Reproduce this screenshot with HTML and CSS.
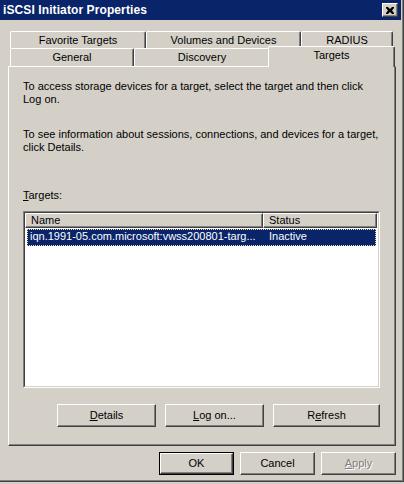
FILE: index.html
```html
<!DOCTYPE html>
<html>
<head>
<meta charset="utf-8">
<link rel="stylesheet" href="styles.css">
</head>
<body>
<div class="window">
  <div class="titlebar">
    <span class="title">iSCSI Initiator Properties</span>
    <div class="close">
      <svg width="8" height="7" viewBox="0 0 8 7"><path d="M0 0h2l2 2 2-2h2v1l-2 2.5 2 2.5v1h-2l-2-2-2 2h-2v-1l2-2.5-2-2.5z" fill="#000"/></svg>
    </div>
  </div>
  <div class="client">
    <div class="tabs">
      <div class="tabrow back">
        <div class="tab w136">Favorite Targets</div>
        <div class="tab w155">Volumes and Devices</div>
        <div class="tab w92">RADIUS</div>
      </div>
      <div class="tabrow front">
        <div class="tab w124">General</div>
        <div class="tab w136">Discovery</div>
        <div class="tab sel">Targets</div>
      </div>
    </div>
    <div class="panel">
      <p class="para">To access storage devices for a target, select the target and then click<br>Log on.</p>
      <p class="para p2">To see information about sessions, connections, and devices for a target,<br>click Details.</p>
      <div class="label"><u>T</u>argets:</div>
      <div class="listbox">
        <div class="listinner">
          <div class="header">
            <div class="hcell name">Name</div>
            <div class="hcell status">Status</div>
          </div>
          <div class="row selected">
            <span class="c-name">iqn.1991-05.com.microsoft:vwss200801-targ...</span>
            <span class="c-status">Inactive</span>
          </div>
        </div>
      </div>
      <div class="panelbuttons">
        <div class="btn w99"><u>D</u>etails</div>
        <div class="btn w99"><u>L</u>og on...</div>
        <div class="btn w107">R<u>e</u>fresh</div>
      </div>
    </div>
    <div class="dlgbuttons">
      <div class="btn b75 default"><span class="inner">OK</span></div>
      <div class="btn b75">Cancel</div>
      <div class="btn b75 disabled"><u>A</u>pply</div>
    </div>
  </div>
</div>
</body>
</html>
```
FILE: styles.css
```css
* { box-sizing: border-box; }
html, body { margin: 0; padding: 0; background: #d4d0c8; }
body { font-family: "Liberation Sans", Arial, sans-serif; font-size: 11px; color: #000; }

.window {
  width: 404px;
  height: 482px;
  background: #d4d0c8;
  border-right: 1px solid #404040;
  border-bottom: 1px solid #404040;
  box-shadow: inset -1px -1px #808080;
  display: flex;
  flex-direction: column;
}

.titlebar {
  height: 20px;
  width: 401px;
  background: #0a246a;
  display: flex;
  align-items: center;
  justify-content: space-between;
  padding: 0 3px 0 3px;
}
.title {
  color: #fff;
  font-weight: bold;
  font-size: 12px;
  letter-spacing: 0.1px;
}
.close {
  width: 16px;
  height: 14px;
  background: #d4d0c8;
  border-top: 1px solid #fff;
  border-left: 1px solid #fff;
  border-right: 1px solid #404040;
  border-bottom: 1px solid #404040;
  box-shadow: inset -1px -1px #808080;
  display: flex;
  align-items: center;
  justify-content: center;
  padding-right: 1px;
}
.close svg { display: block; }

.client {
  padding: 11px 0 0 8px;
  display: flex;
  flex-direction: column;
}

.tabs { padding-left: 2px; }
.tabrow { display: flex; }
.tabrow.back { height: 17px; }
.tabrow.front { height: 18px; }

.tab {
  height: 100%;
  border-top: 1px solid #fff;
  border-left: 1px solid #fff;
  border-right: 1px solid #404040;
  border-radius: 2px 2px 0 0;
  box-shadow: inset -1px 0 #808080;
  text-align: center;
  line-height: 16px;
  white-space: nowrap;
  background: #d4d0c8;
}
.tabrow.front .tab { line-height: 17px; }
.w136 { width: 136px; }
.w155 { width: 155px; }
.w92 { width: 92px; }
.w124 { width: 124px; }
.tab.sel {
  width: 127px;
  height: 21px;
  margin: -2px 0 -1px -2px;
  position: relative;
  z-index: 1;
  line-height: 18px;
}

.panel {
  width: 388px;
  height: 380px;
  border-top: 1px solid #fff;
  border-left: 1px solid #fff;
  border-right: 1px solid #404040;
  border-bottom: 1px solid #404040;
  box-shadow: inset -1px -1px #808080;
  padding: 13px 0 0 14px;
  display: flex;
  flex-direction: column;
}
.para { margin: 0; line-height: 13px; }
.p2 { margin-top: 22px; }
.label { margin-top: 35px; line-height: 13px; }

.listbox {
  margin-top: 9px;
  width: 357px;
  height: 177px;
  border-top: 1px solid #808080;
  border-left: 1px solid #808080;
  border-right: 1px solid #fff;
  border-bottom: 1px solid #fff;
}
.listinner {
  width: 100%;
  height: 100%;
  background: #fff;
  border-top: 1px solid #404040;
  border-left: 1px solid #404040;
  border-right: 1px solid #d4d0c8;
  border-bottom: 1px solid #d4d0c8;
}
.header { display: flex; height: 15px; }
.hcell {
  height: 15px;
  background: #d4d0c8;
  border-top: 1px solid #fff;
  border-left: 1px solid #fff;
  border-right: 1px solid #404040;
  border-bottom: 1px solid #404040;
  box-shadow: inset -1px -1px #808080;
  padding-left: 5px;
  line-height: 12px;
}
.hcell.name { width: 238px; }
.hcell.status { width: 114px; }

.row {
  display: flex;
  margin: 1px 0 0 2px;
  width: 349px;
  height: 17px;
  line-height: 15px;
}
.row.selected {
  background: #0a246a;
  color: #fff;
  outline: 1px dotted #e8e0a0;
  outline-offset: -1px;
}
.c-name { width: 240px; padding-left: 3px; white-space: nowrap; }
.c-status { padding-left: 2px; }

.panelbuttons {
  margin-top: 16px;
  width: 357px;
  display: flex;
  justify-content: flex-end;
  gap: 9px;
}

.btn {
  height: 23px;
  background: #d4d0c8;
  border-top: 1px solid #fff;
  border-left: 1px solid #fff;
  border-right: 1px solid #404040;
  border-bottom: 1px solid #404040;
  box-shadow: inset -1px -1px #808080;
  display: flex;
  align-items: center;
  justify-content: center;
  padding-bottom: 1px;
}
.w99 { width: 99px; }
.w107 { width: 107px; }

.dlgbuttons {
  margin-top: 6px;
  width: 388px;
  display: flex;
  justify-content: flex-end;
  gap: 6px;
}
.b75 { width: 75px; }
.btn.default {
  border: 1px solid #000;
  box-shadow: none;
  padding: 0;
}
.btn.default .inner {
  width: 100%;
  height: 100%;
  border-top: 1px solid #fff;
  border-left: 1px solid #fff;
  border-right: 1px solid #404040;
  border-bottom: 1px solid #404040;
  box-shadow: inset -1px -1px #808080;
  display: flex;
  align-items: center;
  justify-content: center;
  padding-bottom: 1px;
}
.btn.disabled {
  color: #808080;
  text-shadow: 1px 1px #fff;
}
```
